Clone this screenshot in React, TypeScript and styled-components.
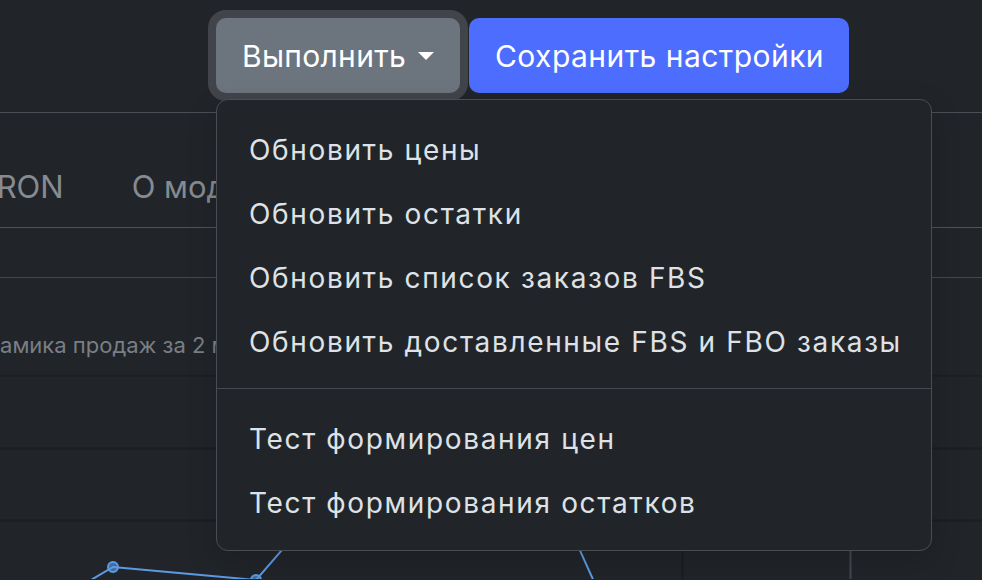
import React from "react";
import styled, { createGlobalStyle } from "styled-components";

const menuGroups = [
  [
    "Обновить цены",
    "Обновить остатки",
    "Обновить список заказов FBS",
    "Обновить доставленные FBS и FBO заказы",
  ],
  ["Тест формирования цен", "Тест формирования остатков"],
];

const tabs = ["CRON", "О модуле"];

const GlobalStyle = createGlobalStyle`
  html, body {
    margin: 0;
    padding: 0;
    background: #212529;
    overflow: hidden;
  }
  body {
    font-family: Inter, "Noto Sans", "Liberation Sans", sans-serif;
    color: #dee2e6;
  }
`;

const Page = styled.div`
  width: 982px;
  height: 580px;
  overflow: hidden;
  background: #212529;
`;

const Header = styled.header`
  height: 113px;
  box-sizing: border-box;
  border-bottom: 1px solid #4a4f55;
  padding: 18px 0 0 216px;
  display: flex;
  align-items: flex-start;
  gap: 9px;
`;

const ActionWrap = styled.div`
  position: relative;
  z-index: 5;
`;

const Button = styled.button<{ $variant: "secondary" | "primary" }>`
  height: 75px;
  border: none;
  border-radius: 10px;
  font-family: inherit;
  font-size: 30px;
  line-height: 1;
  color: #fff;
  display: flex;
  align-items: center;
  cursor: pointer;
  letter-spacing: ${(p) => (p.$variant === "secondary" ? "0.3px" : "0.45px")};
  padding: ${(p) => (p.$variant === "secondary" ? "0 26px 0 26px" : "0 25px 0 26px")};
  background: ${(p) => (p.$variant === "secondary" ? "#6c757d" : "#4d6dff")};
  box-shadow: ${(p) =>
    p.$variant === "secondary" ? "0 0 0 8px rgba(130, 138, 145, 0.33)" : "none"};
`;

const Caret = styled.span`
  display: inline-block;
  margin-left: 12px;
  width: 0;
  height: 0;
  border-top: 8px solid #fff;
  border-left: 8px solid transparent;
  border-right: 8px solid transparent;
`;

const Menu = styled.div`
  position: absolute;
  top: calc(100% + 6px);
  left: 0;
  width: 716px;
  box-sizing: border-box;
  padding: 18px 0 15px;
  background: #212529;
  border: 1px solid #4a4e54;
  border-radius: 12px;
  box-shadow: 0 10px 30px rgba(0, 0, 0, 0.18);
`;

const MenuItem = styled.div`
  height: 64px;
  display: flex;
  align-items: center;
  padding: 0 20px 0 32px;
  font-size: 28px;
  letter-spacing: 1.65px;
  color: #dee2e6;
  white-space: nowrap;
`;

const Divider = styled.hr`
  margin: 14px 0 18px;
  border: none;
  border-top: 1px solid #45494f;
`;

const Content = styled.main`
  display: flex;
  flex-direction: column;
`;

const Tabs = styled.nav`
  display: flex;
  height: 115px;
  box-sizing: border-box;
  margin-left: -60px;
  padding-top: 50px;
  border-bottom: 1px solid #4e5358;
`;

const Tab = styled.div`
  padding: 0 34px;
  height: 48px;
  line-height: 48px;
  font-size: 31px;
  color: #868b91;
  white-space: nowrap;
`;

const Toolbar = styled.div`
  height: 49px;
  border-bottom: 1px solid #45494f;
`;

const ChartTitle = styled.div`
  height: 97px;
  box-sizing: border-box;
  padding-top: 53px;
  margin-left: -44px;
  font-size: 22px;
  line-height: 28px;
  color: #7a7f85;
  white-space: nowrap;
`;

const ChartBox = styled.div`
  height: 204px;
`;

const SalesChart = () => (
  <svg width="982" height="204" viewBox="0 0 982 204">
    {[0, 73, 145].map((y) => (
      <line key={y} x1="0" x2="982" y1={y + 0.5} y2={y + 0.5} stroke="#1b1e22" strokeWidth="2" />
    ))}
    <line x1="682.5" x2="682.5" y1="0" y2="204" stroke="#1b1e22" strokeWidth="2" />
    <line x1="850.5" x2="850.5" y1="0" y2="204" stroke="#45494f" strokeWidth="2" />
    <polyline
      points="40,235 113,192 256,205 340,108 450,40 560,131 600,220"
      fill="none"
      stroke="#5b9be6"
      strokeWidth="2"
    />
    {[
      [113, 192],
      [256, 205],
    ].map(([x, y]) => (
      <circle key={x} cx={x} cy={y} r="5" fill="rgba(91,155,230,0.6)" stroke="#5b9be6" strokeWidth="2" />
    ))}
  </svg>
);

export default function App() {
  return (
    <Page>
      <GlobalStyle />
      <Header>
        <ActionWrap>
          <Button $variant="secondary">
            Выполнить
            <Caret />
          </Button>
          <Menu>
            {menuGroups.map((group, gi) => (
              <React.Fragment key={gi}>
                {gi > 0 && <Divider />}
                {group.map((item) => (
                  <MenuItem key={item}>{item}</MenuItem>
                ))}
              </React.Fragment>
            ))}
          </Menu>
        </ActionWrap>
        <Button $variant="primary">Сохранить настройки</Button>
      </Header>
      <Content>
        <Tabs>
          {tabs.map((t) => (
            <Tab key={t}>{t}</Tab>
          ))}
        </Tabs>
        <Toolbar />
        <ChartTitle>Динамика продаж за 2 месяца</ChartTitle>
        <ChartBox>
          <SalesChart />
        </ChartBox>
      </Content>
    </Page>
  );
}
